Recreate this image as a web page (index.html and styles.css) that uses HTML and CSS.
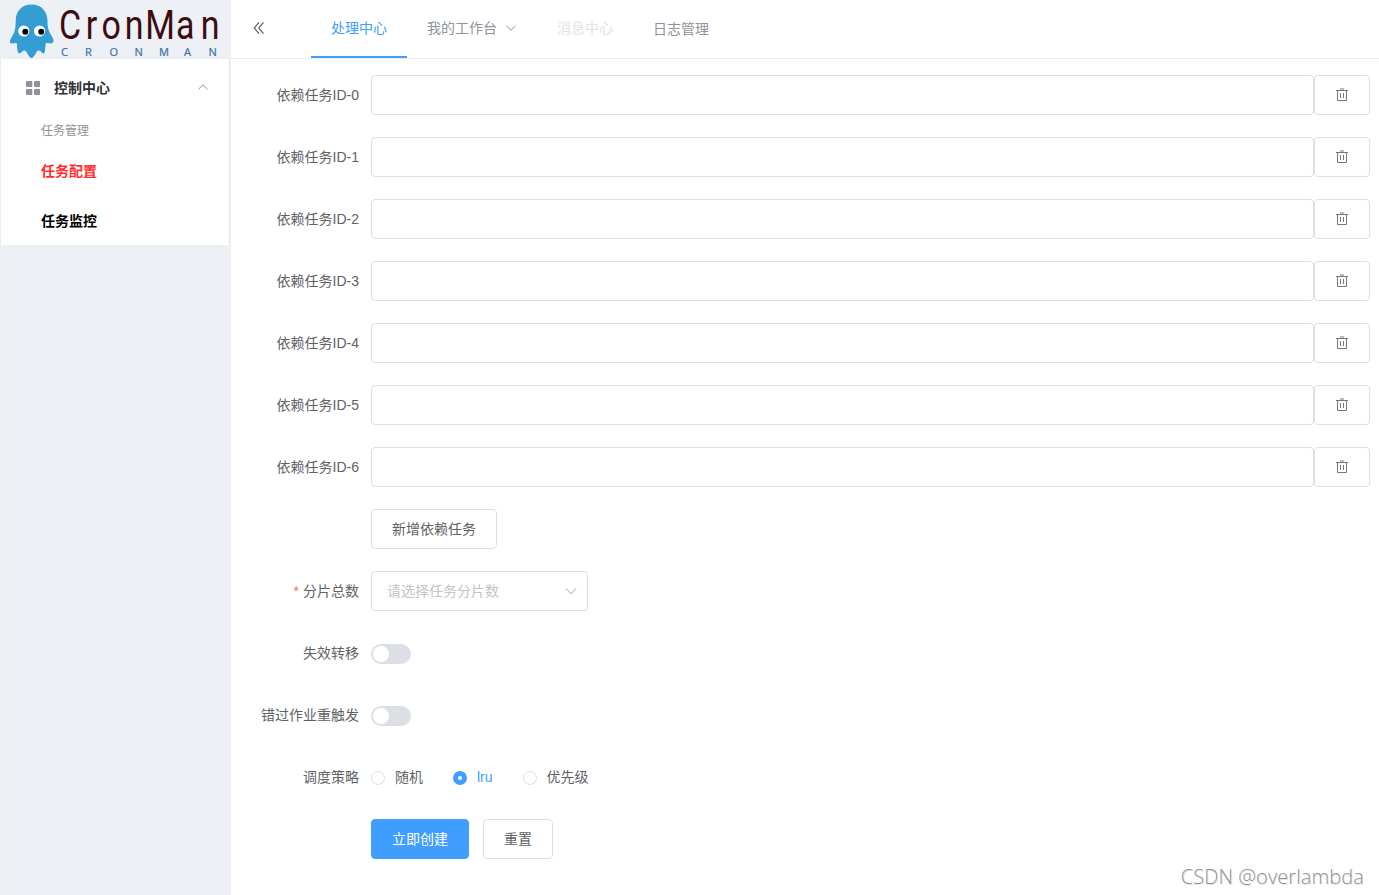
FILE: index.html
```html
<!DOCTYPE html>
<html lang="zh-CN">
  <head>
    <meta charset="UTF-8" />
    <meta name="viewport" content="width=device-width, initial-scale=1.0" />
    <title>CronMan</title>
    <link rel="stylesheet" href="styles.css">
  </head>
  <body>
    <svg width="0" height="0" class="sprite">
      <symbol id="icon-delete" viewBox="0 0 14 14">
        <path d="M1 2.500h12M5 1h4M2.500 3v9.500h9V3M5.500 5v5M8.500 5v5" />
      </symbol>
      <symbol id="icon-arrow" viewBox="0 0 12 12">
        <path d="M1.500 3.800L6 8.200l4.500-4.400" />
      </symbol>
    </svg>
    <div class="container">
      <div class="aside">
        <svg class="logo" width="230" height="59" viewBox="0 0 230 59">
          <path fill="#349dd2" d="M31.500 4.500C21 4.500 15.700 12 15.700 21c0 8-1.200 11.500-4.200 16.500-1.800 3-2.500 6 .5 6 2 0 3-.8 4.800-.3.500 3 .2 6.500 1.200 9.300.8 2 3 .2 4.500-1.200 1.300-1.200 2.700-1.200 4 .8 1.500 2.500 3 6 5 6s3.500-3.500 5-6c1.300-2 2.700-2 4-.8 1.500 1.400 3.300 3.200 4.100 1.200.9-2.800.4-6 1.200-9.300 1.800-.5 3 .3 5 .3 3 0 3.300-3 1.700-6-3.500-6-5-8.500-5-16.500 0-9-5.500-16.500-16-16.500z" />
          <circle cx="23.800" cy="31" r="5.600" fill="#fff" />
          <circle cx="39.500" cy="31" r="5.600" fill="#fff" />
          <circle cx="25.300" cy="31.700" r="3" />
          <circle cx="41.200" cy="31.700" r="3" />
          <text class="logo-name" transform="scale(.85 1)" x="69.400 100.800 119.400 146.700 170.800 207.200 236.100" y="39">CronMan</text>
          <text class="logo-sub" x="61 85 109.500 134.500 159 184 208.500" y="56">CRONMAN</text>
        </svg>
        <div class="menu">
          <div class="submenu-title">
            <svg class="menu-icon" width="14" height="14" viewBox="0 0 14 14">
              <rect width="6.300" height="6" rx=".7" />
              <rect x="8" width="6" height="6" rx=".7" />
              <rect y="8" width="6.300" height="6" rx=".7" />
              <rect x="8" y="8" width="6" height="6" rx=".7" />
            </svg>
            <span>控制中心</span>
            <svg class="arrow up" width="12" height="12"><use href="#icon-arrow" /></svg>
          </div>
          <div class="group-title">任务管理</div>
          <div class="menu-item active">任务配置</div>
          <div class="menu-item">任务监控</div>
        </div>
      </div>
      <div class="main">
        <div class="header">
          <svg class="collapse" width="14" height="14" viewBox="0 0 14 14">
            <path d="M7 1.300L2.200 7 7 12.700M11.500 1.300L6.700 7l4.800 5.700" />
          </svg>
          <div class="nav">
            <div class="nav-item active">处理中心</div>
            <div class="nav-item">我的工作台<svg class="arrow" width="12" height="12"><use href="#icon-arrow" /></svg></div>
            <div class="nav-item disabled">消息中心</div>
            <div class="nav-item link">日志管理</div>
          </div>
        </div>
        <form class="form" onsubmit="return false">
          <div id="depends"></div>
          <div class="form-item">
            <label></label>
            <button type="button" class="btn">新增依赖任务</button>
          </div>
          <div class="form-item">
            <label class="required">分片总数</label>
            <div class="select">
              <span>请选择任务分片数</span>
              <svg class="arrow" width="14" height="14"><use href="#icon-arrow" /></svg>
            </div>
          </div>
          <div class="form-item">
            <label>失效转移</label>
            <span class="switch"></span>
          </div>
          <div class="form-item">
            <label>错过作业重触发</label>
            <span class="switch"></span>
          </div>
          <div class="form-item">
            <label>调度策略</label>
            <span class="radio"><i></i>随机</span>
            <span class="radio checked"><i></i>lru</span>
            <span class="radio"><i></i>优先级</span>
          </div>
          <div class="form-item">
            <label></label>
            <button type="button" class="btn primary">立即创建</button>
            <button type="button" class="btn">重置</button>
          </div>
        </form>
      </div>
    </div>
    <div class="watermark">CSDN @overlambda</div>
    <script>
      const depends = document.getElementById("depends");
      for (let i = 0; i < 7; i++) {
        const item = document.createElement("div");
        item.className = "form-item";
        item.innerHTML = `
          <label>依赖任务ID-${i}</label>
          <input type="text" class="input" />
          <button type="button" class="btn icon-btn">
            <svg width="14" height="14"><use href="#icon-delete" /></svg>
          </button>
        `;
        depends.appendChild(item);
      }
    </script>
  </body>
</html>
```
FILE: styles.css
```css
* {
  box-sizing: border-box;
}
body {
  margin: 0;
  font-family: "Liberation Sans", "Noto Sans CJK SC", sans-serif;
  font-size: 14px;
  color: #606266;
  background: #fff;
  overflow: hidden;
}
.sprite {
  position: absolute;
}
svg {
  flex-shrink: 0;
}
.container {
  display: flex;
  height: 100vh;
}
.aside {
  width: 231px;
  flex-shrink: 0;
  background: #edf1f6;
  border-left: 1px solid #eee;
  border-right: 1px solid #eee;
}
.logo {
  display: block;
  margin-left: -1px;
}
.logo-name {
  font-family: Roboto, sans-serif;
  font-size: 40px;
  fill: #3d0c10;
}
.logo-sub {
  font-family: "Noto Sans", sans-serif;
  font-size: 11px;
  fill: #3f74ab;
  stroke: #3f74ab;
  stroke-width: 0.2;
}
.menu {
  height: 186px;
  background: #fff;
  border-right: 1px solid #e6e6e6;
}
.submenu-title {
  display: flex;
  align-items: center;
  height: 56px;
  padding: 0 20px 0 25px;
  color: #303133;
  font-weight: bold;
}
.submenu-title span {
  flex: 1;
  margin-left: 14px;
}
.menu-icon {
  fill: #909399;
  margin-top: 2px;
}
.arrow {
  fill: none;
  stroke: #909399;
  stroke-width: 1;
}
.arrow.up {
  transform: rotate(180deg);
}
.group-title {
  height: 30px;
  line-height: 32px;
  padding-left: 40px;
  font-size: 12px;
  color: #909399;
}
.menu-item {
  height: 50px;
  line-height: 52px;
  padding-left: 40px;
  color: #000;
  font-weight: bold;
}
.menu-item.active {
  color: #ff2d2d;
}
.main {
  flex: 1;
}
.header {
  display: flex;
  height: 59px;
  border-bottom: 1px solid #ebebeb;
}
.collapse {
  margin: 21px 45px 0 21px;
  fill: none;
  stroke: #606266;
  stroke-width: 1.2;
}
.nav {
  display: flex;
  height: 58px;
  line-height: 56px;
}
.nav-item {
  display: flex;
  align-items: center;
  padding: 0 20px;
  color: #909399;
  border-bottom: 2px solid transparent;
}
.nav-item.active {
  color: #409eff;
  border-bottom-color: #409eff;
}
.nav-item.disabled {
  color: #e2e2e3;
}
.nav-item.link {
  padding-top: 2px;
}
.nav-item .arrow {
  margin-left: 8px;
}
.form {
  padding: 16px 9px 0 0;
}
.form-item {
  display: flex;
  height: 40px;
  margin-bottom: 22px;
}
.form-item label {
  width: 140px;
  padding-right: 12px;
  line-height: 40px;
  text-align: right;
  flex-shrink: 0;
}
.required::before {
  content: "*";
  color: #f56c6c;
  margin-right: 4px;
}
.input {
  flex: 1;
  min-width: 0;
  padding: 0 15px;
  border: 1px solid #dcdfe6;
  border-radius: 4px;
}
.btn {
  height: 40px;
  padding: 0 20px 2px;
  border: 1px solid #dcdfe6;
  border-radius: 4px;
  background: #fff;
  color: #606266;
  font-family: inherit;
  font-size: 14px;
}
.btn.primary {
  margin-right: 14px;
  background: #409eff;
  border-color: #409eff;
  color: #fff;
}
.icon-btn {
  padding-bottom: 0;
}
.icon-btn svg {
  display: block;
  fill: none;
  stroke: #75777b;
  stroke-width: 1;
}
.select {
  display: flex;
  align-items: center;
  justify-content: space-between;
  width: 217px;
  padding: 0 9px 0 15px;
  border: 1px solid #dcdfe6;
  border-radius: 4px;
  color: #c0c4cc;
}
.select span {
  padding-bottom: 2px;
}
.select .arrow {
  stroke: #c0c4cc;
}
.switch {
  width: 40px;
  height: 20px;
  margin-top: 11px;
  padding: 2px;
  border-radius: 10px;
  background: #dcdfe6;
}
.switch::before {
  content: "";
  display: block;
  width: 16px;
  height: 16px;
  border-radius: 50%;
  background: #fff;
}
.radio {
  display: flex;
  margin-right: 30px;
  line-height: 40px;
}
.radio i {
  width: 14px;
  height: 14px;
  margin: 14px 10px 0 0;
  border: 1px solid #dcdfe6;
  border-radius: 50%;
}
.radio.checked {
  color: #409eff;
}
.radio.checked i {
  border: 5px solid #409eff;
}
.watermark {
  position: absolute;
  right: 15px;
  bottom: 5px;
  font-family: "Open Sans", "Noto Sans", sans-serif;
  font-size: 20px;
  font-weight: 300;
  letter-spacing: 0.1px;
  color: #929292;
  text-shadow: 1px 1px 0 #e6e6e6;
}
```
